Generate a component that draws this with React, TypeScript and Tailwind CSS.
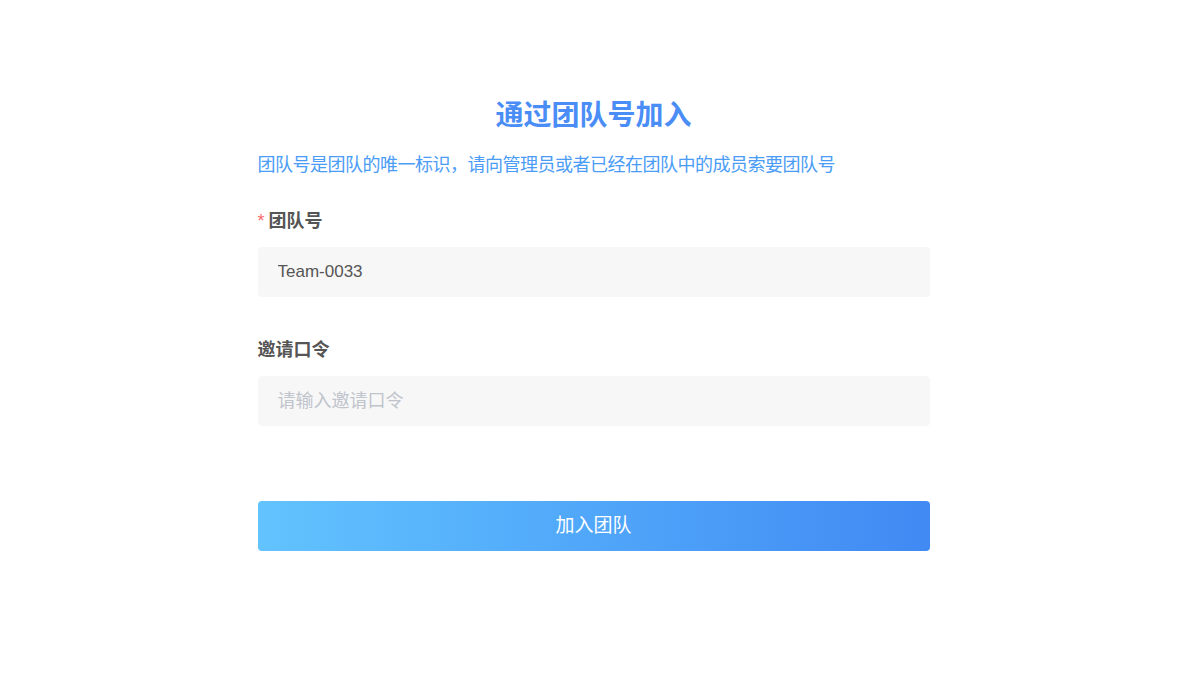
import { useState } from "react";

const font = "font-['Liberation_Sans','Noto_Sans_CJK_SC',sans-serif]";

const JoinTeam: React.FC = () => {
    const [teamNo, setTeamNo] = useState<string>("Team-0033")
    const [code, setCode] = useState<string>("")

    return <div className={`min-h-[697px] w-[1187px] bg-white ${font}`}>
        <div className="w-[672px] mx-auto pt-[96px] flex flex-col">
            <div className="text-center text-[28px] leading-[40px] font-bold text-[#4a8df6]">通过团队号加入</div>
            <div className="mt-[17px] text-[18px] leading-[24px] tracking-[-0.5px] text-[#4a9cf6]">团队号是团队的唯一标识，请向管理员或者已经在团队中的成员索要团队号</div>

            <div className="mt-[32px] text-[18px] leading-[24px] font-bold text-[#555]">
                <span className="text-[#f56c6c] font-normal mr-[4px]">*</span>团队号
            </div>
            <input
                value={teamNo}
                onChange={(e) => setTeamNo(e.target.value)}
                className="mt-[14px] h-[50px] rounded-[4px] bg-[#f7f7f7] px-[20px] text-[17px] text-[#555] outline-none"
            />

            <div className="mt-[41px] text-[18px] leading-[24px] font-bold text-[#555]">邀请口令</div>
            <input
                value={code}
                onChange={(e) => setCode(e.target.value)}
                placeholder="请输入邀请口令"
                className="mt-[14px] h-[50px] rounded-[4px] bg-[#f7f7f7] px-[20px] text-[18px] text-[#555] placeholder:text-[#c0c4cc] outline-none"
            />

            <button className="mt-[75px] h-[50px] rounded-[4px] bg-gradient-to-r from-[#62c3fe] to-[#4189f3] text-white text-[19px]">
                加入团队
            </button>
        </div>
    </div>
};

export default function App() {
    return <JoinTeam />
}
